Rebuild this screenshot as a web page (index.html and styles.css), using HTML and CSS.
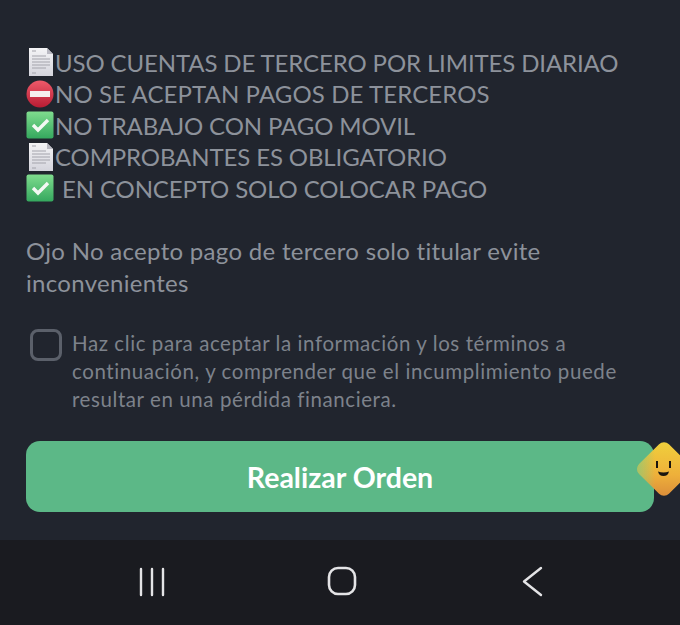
FILE: index.html
```html
<!DOCTYPE html>
<html>
<head>
  <title>Realizar Orden</title>
  <link rel="stylesheet" href="styles.css">
</head>
<body>
  <svg class="defs" width="0" height="0">
    <defs>
      <linearGradient id="check-bg" x1="0" y1="0" x2="0" y2="1">
        <stop offset="0" stop-color="#7fdc8e"/>
        <stop offset="1" stop-color="#35a85e"/>
      </linearGradient>
      <linearGradient id="stop-bg" x1="0" y1="0" x2="0" y2="1">
        <stop offset="0" stop-color="#ee5a6a"/>
        <stop offset="1" stop-color="#b81c33"/>
      </linearGradient>
      <linearGradient id="doc-bg" x1="0" y1="0" x2="0" y2="1">
        <stop offset="0" stop-color="#f4f4f6"/>
        <stop offset="1" stop-color="#d4d4dc"/>
      </linearGradient>
      <linearGradient id="face-bg" x1="0" y1="0" x2="1" y2="1">
        <stop offset="0" stop-color="#f0d23c"/>
        <stop offset="0.6" stop-color="#eeb03a"/>
        <stop offset="1" stop-color="#d98a3a"/>
      </linearGradient>
      <linearGradient id="face-tip" x1="0" y1="1" x2="1" y2="0">
        <stop offset="0" stop-color="#93c874" stop-opacity="0.95"/>
        <stop offset="0.35" stop-color="#93c874" stop-opacity="0"/>
      </linearGradient>
      <symbol id="doc" viewBox="0 0 28 30">
        <path d="M3 1h18l6 6v22H3z" fill="url(#doc-bg)"/>
        <path d="M21 1l6 6h-6z" fill="#b9b9c2"/>
        <path d="M6 4h4M6 9h14M6 12h18M6 15h18M6 18h18M6 21h14M6 26h4" stroke="#a3a4ac" stroke-width="1.200" fill="none"/>
      </symbol>
      <symbol id="stop" viewBox="0 0 28 30">
        <circle cx="14" cy="15" r="13.500" fill="url(#stop-bg)"/>
        <rect x="4" y="12" width="20" height="6" fill="#f6eeee"/>
      </symbol>
      <symbol id="check" viewBox="0 0 28 30">
        <rect x="0.500" y="1.500" width="27" height="27" rx="2" fill="url(#check-bg)"/>
        <path d="M7 15l5 5 10-10" stroke="#f4f8f4" stroke-width="3.400" fill="none"/>
      </symbol>
    </defs>
  </svg>

  <main class="content">
    <ul class="rules">
      <li><svg class="emoji"><use href="#doc"/></svg>USO CUENTAS DE TERCERO POR LIMITES DIARIAO</li>
      <li class="wide"><svg class="emoji"><use href="#stop"/></svg>NO SE ACEPTAN PAGOS DE TERCEROS</li>
      <li><svg class="emoji"><use href="#check"/></svg>NO TRABAJO CON PAGO MOVIL</li>
      <li><svg class="emoji"><use href="#doc"/></svg>COMPROBANTES ES OBLIGATORIO</li>
      <li><svg class="emoji"><use href="#check"/></svg><span class="gap">EN CONCEPTO SOLO COLOCAR PAGO</span></li>
    </ul>

    <p class="note">Ojo No acepto pago de tercero solo titular evite inconvenientes</p>

    <div class="terms">
      <span class="checkbox"></span>
      <p class="terms-text">Haz clic para aceptar la información y los términos a continuación, y comprender que el incumplimiento puede resultar en una pérdida financiera.</p>
    </div>

    <div class="order">
      <button class="order-btn">Realizar Orden</button>
      <svg class="mascot" viewBox="0 0 56 56">
        <rect x="7" y="7" width="42" height="42" rx="7" transform="rotate(45 28 28)" fill="url(#face-bg)"/>
        <rect x="7" y="7" width="42" height="42" rx="7" transform="rotate(45 28 28)" fill="url(#face-tip)"/>
        <path d="M21 20v7M34 20v7" stroke="#1a1510" stroke-width="2" fill="none"/>
        <path d="M22 30.500q5.500 2 11 0q-1 4.500-5.500 4.500t-5.500-4.500z" fill="#1a1510"/>
      </svg>
    </div>
  </main>

  <nav class="navbar">
    <svg class="nav-icon" viewBox="0 0 32 32">
      <path d="M5 4v26M16 4v26M27 4v26" stroke="#e4e4e6" stroke-width="2.400" stroke-linecap="round" fill="none"/>
    </svg>
    <svg class="nav-icon home" viewBox="0 0 32 32">
      <rect x="3" y="3" width="26" height="26" rx="9" stroke="#e4e4e6" stroke-width="2.600" fill="none"/>
    </svg>
    <svg class="nav-icon" viewBox="0 0 32 32">
      <path d="M24 3L7 16.500 24 30" stroke="#e4e4e6" stroke-width="2.400" stroke-linecap="round" stroke-linejoin="round" fill="none"/>
    </svg>
  </nav>
</body>
</html>
```

FILE: styles.css
```css
html, body {
  margin: 0;
  padding: 0;
}

body {
  width: 680px;
  height: 625px;
  overflow: hidden;
  display: flex;
  flex-direction: column;
  background-color: #21252e;
  font-family: "Lato", "Liberation Sans", sans-serif;
  color: #8d929b;
}

.defs {
  position: absolute;
}

.content {
  flex: 1;
  padding: 46.5px 26px 0 26px;
  box-sizing: border-box;
}

.rules {
  list-style: none;
  margin: 0;
  padding: 0;
  font-size: 24px;
  line-height: 31.5px;
  letter-spacing: -0.12px;
}

.rules li {
  display: flex;
  align-items: center;
  height: 31.5px;
  white-space: nowrap;
}

.rules .wide {
  letter-spacing: 0.1px;
}

.emoji {
  width: 28px;
  height: 30px;
  flex-shrink: 0;
  margin-right: 1px;
}

.gap {
  margin-left: 7px;
}

.note {
  margin: 31px 0 0 0;
  font-size: 24px;
  line-height: 32px;
  letter-spacing: 0.3px;
  width: 590px;
}

.terms {
  display: flex;
  gap: 10px;
  margin: 29px 0 0 4px;
}

.checkbox {
  width: 32px;
  height: 32px;
  margin-top: 1px;
  box-sizing: border-box;
  flex-shrink: 0;
  border: 3px solid #5b606a;
  border-radius: 8px;
}

.terms-text {
  margin: 0;
  padding-top: 1px;
  font-size: 20.5px;
  line-height: 28px;
  letter-spacing: 0.58px;
  color: #7d828b;
  width: 570px;
}

.order {
  position: relative;
  margin-top: 28px;
}

.order-btn {
  display: block;
  width: 628px;
  height: 71px;
  border: none;
  border-radius: 14px;
  background-color: #5cb887;
  color: #fff;
  font-family: inherit;
  font-size: 28.5px;
  font-weight: 700;
}

.mascot {
  position: absolute;
  left: 610px;
  top: 0;
  width: 56px;
  height: 56px;
}

.navbar {
  height: 85px;
  background-color: #1a1b20;
  display: flex;
  align-items: center;
  padding-bottom: 3px;
  box-sizing: border-box;
  justify-content: space-between;
  padding-left: 136px;
  padding-right: 131px;
}

.nav-icon {
  width: 32px;
  height: 32px;
}

.home {
  margin-left: -2px;
}
```
